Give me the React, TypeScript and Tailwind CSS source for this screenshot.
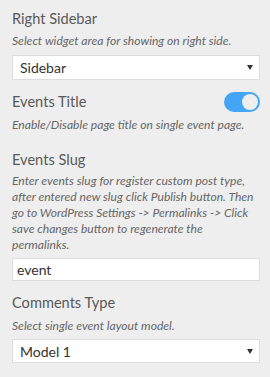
import type { ReactNode } from 'react';

const font = { fontFamily: '"Lato", "Liberation Sans", sans-serif' };

const Label = ({ children }: { children: ReactNode }) => (
  <div className="text-[14.6px] leading-5 text-[#595959]">{children}</div>
);

const Desc = ({ children, className = '' }: { children: ReactNode; className?: string }) => (
  <div className={`text-[12.1px] leading-4 italic text-[#666666] whitespace-nowrap ${className}`}>
    {children}
  </div>
);

const Caret = () => (
  <svg width="6" height="5" viewBox="0 0 6 5" className="text-[#333333]">
    <path d="M0 0 H6 L3 5 Z" fill="currentColor" />
  </svg>
);

const SelectBox = ({ value, className = '' }: { value: string; className?: string }) => (
  <div
    className={`flex items-center justify-between bg-white border border-[#dddddd] pl-[7px] pr-[6px] text-[14px] text-[#333333] ${className}`}
  >
    <span>{value}</span>
    <Caret />
  </div>
);

const Toggle = () => (
  <div className="w-[36px] h-[20px] rounded-full bg-[#42a5f5] flex items-center justify-end pr-[2px]">
    <div className="w-[16px] h-[16px] rounded-full bg-[#eeeeee]" />
  </div>
);

export default function App() {
  return (
    <div className="w-[270px] h-[377px] bg-[#eeeeee] pl-[12px] pr-[10px] pt-[9px]" style={font}>
      <Label>Right Sidebar</Label>
      <Desc className="mt-[4px]">Select widget area for showing on right side.</Desc>
      <SelectBox value="Sidebar" className="mt-[6px] h-[25px]" />

      <div className="mt-[12px] flex items-center justify-between">
        <Label>Events Title</Label>
        <Toggle />
      </div>
      <Desc className="mt-[5px]">Enable/Disable page title on single event page.</Desc>

      <div className="mt-[17px]">
        <Label>Events Slug</Label>
      </div>
      <Desc className="mt-[3px]">
        Enter events slug for register custom post type,
        <br />
        after entered new slug click Publish button. Then
        <br />
        go to WordPress Settings -&gt; Permalinks -&gt; Click
        <br />
        save changes button to regenerate the
        <br />
        permalinks.
      </Desc>
      <div className="mt-[5px] h-[23px] bg-white border border-[#dddddd] pl-[4px] text-[14px] leading-[21px] text-[#333333]">
        event
      </div>

      <div className="mt-[12px]">
        <Label>Comments Type</Label>
      </div>
      <Desc className="mt-[5px]">Select single event layout model.</Desc>
      <SelectBox value="Model 1" className="mt-[5px] h-[24px]" />
    </div>
  );
}
